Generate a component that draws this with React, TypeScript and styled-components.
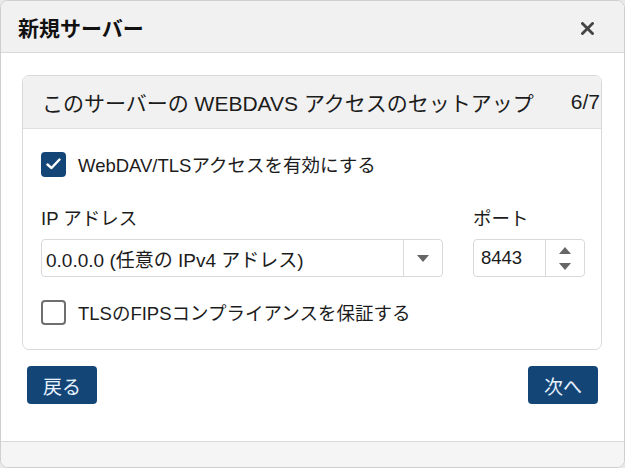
import styled, { createGlobalStyle } from 'styled-components'

const colors = {
  primary: '#134677',
  headerBg: '#f1f1f1',
  border: '#d9d9d9',
  text: '#222222',
}

const GlobalStyle = createGlobalStyle`
  html, body {
    margin: 0;
    padding: 0;
    background: #e9e9e9;
  }
  body {
    font-family: "Liberation Sans", Arial, "Noto Sans CJK JP", sans-serif;
    color: ${colors.text};
  }
`

const Dialog = styled.div`
  width: 623px;
  height: 466px;
  background: #ffffff;
  border: 1px solid #cfcfcf;
  border-radius: 8px;
  overflow: hidden;
  display: flex;
  flex-direction: column;
`

const DialogHeader = styled.div`
  height: 51px;
  flex: none;
  background: ${colors.headerBg};
  border-bottom: 1px solid ${colors.border};
  display: flex;
  align-items: center;
  justify-content: space-between;
  padding: 0 30px 0 17px;
`

const DialogTitle = styled.h1`
  margin: 0;
  font-size: 21px;
  font-weight: 700;
  color: #111111;
  letter-spacing: 0;
`

const CloseButton = styled.button`
  border: none;
  background: transparent;
  padding: 0;
  width: 13px;
  height: 13px;
  margin-top: 4px;
  display: flex;
  cursor: pointer;
`

const DialogBody = styled.div`
  flex: 1;
  padding: 22px 22px 0 21px;
  display: flex;
  flex-direction: column;
`

const Panel = styled.section`
  border: 1px solid ${colors.border};
  border-radius: 7px;
  overflow: hidden;
`

const PanelHeader = styled.div`
  height: 52px;
  background: ${colors.headerBg};
  border-bottom: 1px solid #e0e0e0;
  display: flex;
  align-items: center;
  justify-content: space-between;
  padding: 0 1px 0 19px;
  font-size: 21px;
  color: #1c1c1c;
`

const PanelContent = styled.div`
  padding: 22px 16px 24px 18px;
  display: flex;
  flex-direction: column;
`

const CheckRow = styled.label`
  display: flex;
  align-items: center;
  gap: 12px;
  font-size: 18.5px;
  color: #1c1c1c;
  cursor: pointer;
`

const CheckBox = styled.span<{ checked: boolean }>`
  width: 25px;
  height: 25px;
  box-sizing: border-box;
  border-radius: 4px;
  display: flex;
  align-items: center;
  justify-content: center;
  background: ${({ checked }) => (checked ? colors.primary : '#ffffff')};
  border: 2px solid ${({ checked }) => (checked ? colors.primary : '#6f6f6f')};
`

const FieldRow = styled.div`
  display: flex;
  justify-content: space-between;
  margin: 32px 0 22px;
`

const Field = styled.div`
  display: flex;
  flex-direction: column;
  gap: 10px;
`

const FieldLabel = styled.span`
  font-size: 18.5px;
  color: #1c1c1c;
  line-height: 20px;
`

const SelectBox = styled.div`
  width: 402px;
  height: 38px;
  box-sizing: border-box;
  border: 1px solid ${colors.border};
  border-radius: 4px;
  display: flex;
  align-items: center;
`

const SelectValue = styled.span`
  flex: 1;
  padding-left: 4px;
  font-size: 19px;
  color: #1c1c1c;
`

const SideButton = styled.span<{ width: number }>`
  width: ${({ width }) => width}px;
  height: 100%;
  border-left: 1px solid ${colors.border};
  display: flex;
  flex-direction: column;
  align-items: center;
  justify-content: center;
  gap: 9px;
`

const NumberBox = styled.div`
  width: 112px;
  height: 38px;
  box-sizing: border-box;
  border: 1px solid ${colors.border};
  border-radius: 4px;
  display: flex;
  align-items: center;
`

const NumberValue = styled.span`
  flex: 1;
  padding-left: 7px;
  font-size: 18.5px;
  color: #1c1c1c;
`

const Actions = styled.div`
  display: flex;
  justify-content: space-between;
  padding: 16px 4px 0 5px;
`

const PrimaryButton = styled.button`
  height: 38px;
  padding: 0 16px;
  border: none;
  border-radius: 4px;
  background: ${colors.primary};
  color: #e8f1ff;
  font-family: "Noto Sans CJK JP", sans-serif;
  font-size: 19px;
  cursor: pointer;
`

const DialogFooter = styled.div`
  height: 25px;
  flex: none;
  background: #f5f5f5;
  border-top: 1px solid ${colors.border};
`

function Triangle ({ up }: { up?: boolean }): JSX.Element {
  return (
    <svg width='12' height='7' viewBox='0 0 12 7'>
      <path d={up ? 'M0 7 L6 0 L12 7 Z' : 'M0 0 L12 0 L6 7 Z'} fill='#666' />
    </svg>
  )
}

function Check (): JSX.Element {
  return (
    <svg width='15' height='12' viewBox='0 0 15 12'>
      <path d='M1.5 6.5 L5.5 10 L13.5 1.5' stroke='#fff' strokeWidth='2.4' fill='none' strokeLinecap='round' strokeLinejoin='round' />
    </svg>
  )
}

function App (): JSX.Element {
  return (
    <>
      <GlobalStyle />
      <Dialog>
        <DialogHeader>
          <DialogTitle>新規サーバー</DialogTitle>
          <CloseButton aria-label='close'>
            <svg width='13' height='13' viewBox='0 0 13 13'>
              <path d='M1.5 1.5 L11.5 11.5 M11.5 1.5 L1.5 11.5' stroke='#444' strokeWidth='2.8' strokeLinecap='square' />
            </svg>
          </CloseButton>
        </DialogHeader>
        <DialogBody>
          <Panel>
            <PanelHeader>
              <span>このサーバーの WEBDAVS アクセスのセットアップ</span>
              <span>6/7</span>
            </PanelHeader>
            <PanelContent>
              <CheckRow>
                <CheckBox checked><Check /></CheckBox>
                WebDAV/TLSアクセスを有効にする
              </CheckRow>
              <FieldRow>
                <Field>
                  <FieldLabel>IP アドレス</FieldLabel>
                  <SelectBox>
                    <SelectValue>0.0.0.0 (任意の IPv4 アドレス)</SelectValue>
                    <SideButton width={38}><Triangle /></SideButton>
                  </SelectBox>
                </Field>
                <Field>
                  <FieldLabel>ポート</FieldLabel>
                  <NumberBox>
                    <NumberValue>8443</NumberValue>
                    <SideButton width={38}>
                      <Triangle up />
                      <Triangle />
                    </SideButton>
                  </NumberBox>
                </Field>
              </FieldRow>
              <CheckRow>
                <CheckBox checked={false} />
                TLSのFIPSコンプライアンスを保証する
              </CheckRow>
            </PanelContent>
          </Panel>
          <Actions>
            <PrimaryButton>戻る</PrimaryButton>
            <PrimaryButton>次へ</PrimaryButton>
          </Actions>
        </DialogBody>
        <DialogFooter />
      </Dialog>
    </>
  )
}

export default App
